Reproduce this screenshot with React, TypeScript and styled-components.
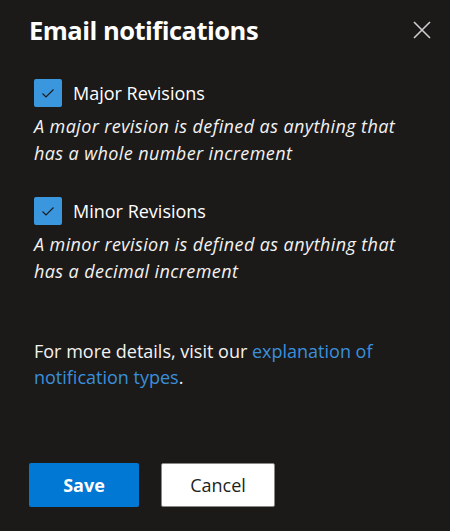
import React, { useState } from "react";
import styled, { createGlobalStyle } from "styled-components";

const GlobalStyle = createGlobalStyle`
  html, body {
    margin: 0;
    padding: 0;
    background: #1b1a19;
  }
  body {
    font-family: "Open Sans", "Noto Sans", "Liberation Sans", sans-serif;
    color: #ffffff;
  }
`;

const Panel = styled.div`
  width: 450px;
  height: 531px;
  box-sizing: border-box;
  background: #1b1a19;
  padding: 14px 19px 0 29px;
  display: flex;
  flex-direction: column;
`;

const Header = styled.div`
  display: flex;
  align-items: flex-start;
  justify-content: space-between;
`;

const Title = styled.h2`
  margin: 0;
  font-size: 25.5px;
  font-weight: 700;
  line-height: 32px;
  letter-spacing: -0.5px;
  color: #ffffff;
`;

const CloseButton = styled.button`
  background: none;
  border: none;
  padding: 0;
  margin-top: 7px;
  width: 18px;
  height: 18px;
  cursor: pointer;
  color: #cfcfcf;
  display: flex;
`;

const Body = styled.div`
  padding-left: 5px;
  padding-right: 28px;
  margin-top: 33px;
`;

const Option = styled.div`
  margin-bottom: 31px;
`;

const CheckRow = styled.label`
  display: flex;
  align-items: center;
  gap: 11px;
  cursor: pointer;
  font-size: 18px;
  line-height: 28px;
`;

const Box = styled.span<{ checked: boolean }>`
  width: 28px;
  height: 28px;
  box-sizing: border-box;
  border-radius: 2px;
  background: ${(p) => (p.checked ? "#3a96dd" : "transparent")};
  border: ${(p) => (p.checked ? "none" : "1px solid #c8c6c4")};
  display: flex;
  align-items: center;
  justify-content: center;
`;

const Description = styled.p`
  margin: 6px 0 0 0;
  font-style: italic;
  font-size: 18px;
  line-height: 26.5px;
  letter-spacing: 0.4px;
  color: #f3f2f1;
`;

const Note = styled.p`
  margin: 54px 0 0 0;
  font-size: 18px;
  line-height: 26px;
  color: #f3f2f1;
`;

const Link = styled.a`
  color: #3a8fdb;
  text-decoration: none;
`;

const Footer = styled.div`
  display: flex;
  gap: 22px;
  margin-top: 73px;
`;

const Button = styled.button<{ primary?: boolean }>`
  height: 44px;
  box-sizing: border-box;
  border-radius: 2px;
  font-family: inherit;
  font-size: 18px;
  cursor: pointer;
  padding: 0;
  ${(p) =>
    p.primary
      ? `
    width: 110px;
    background: #0078d4;
    color: #ffffff;
    border: none;
    font-weight: 700;
  `
      : `
    width: 114px;
    background: #ffffff;
    color: #201f1e;
    border: 1px solid #8a8886;
    font-weight: 400;
  `}
`;

const CheckIcon = () => (
  <svg width="16" height="16" viewBox="0 0 16 16" fill="none">
    <path d="M2.5 8.5 L6 12 L13.5 4.5" stroke="#1b1a19" strokeWidth="1.1" />
  </svg>
);

const CloseIcon = () => (
  <svg width="18" height="18" viewBox="0 0 18 18" fill="none">
    <path d="M1 1 L17 17 M17 1 L1 17" stroke="currentColor" strokeWidth="1.6" />
  </svg>
);

const options = [
  {
    label: "Major Revisions",
    text: "A major revision is defined as anything that has a whole number increment",
  },
  {
    label: "Minor Revisions",
    text: "A minor revision is defined as anything that has a decimal increment",
  },
];

export default function App() {
  const [checked, setChecked] = useState([true, true]);

  const toggle = (i: number) => {
    const next = [...checked];
    next[i] = !next[i];
    setChecked(next);
  };

  return (
    <>
      <GlobalStyle />
      <Panel>
        <Header>
          <Title>Email notifications</Title>
          <CloseButton aria-label="Close">
            <CloseIcon />
          </CloseButton>
        </Header>
        <Body>
          {options.map((o, i) => (
            <Option key={o.label}>
              <CheckRow onClick={() => toggle(i)}>
                <Box checked={checked[i]}>{checked[i] && <CheckIcon />}</Box>
                {o.label}
              </CheckRow>
              <Description>{o.text}</Description>
            </Option>
          ))}
          <Note>
            For more details, visit our <Link href="#">explanation of notification types</Link>.
          </Note>
        </Body>
        <Footer>
          <Button primary>Save</Button>
          <Button>Cancel</Button>
        </Footer>
      </Panel>
    </>
  );
}
